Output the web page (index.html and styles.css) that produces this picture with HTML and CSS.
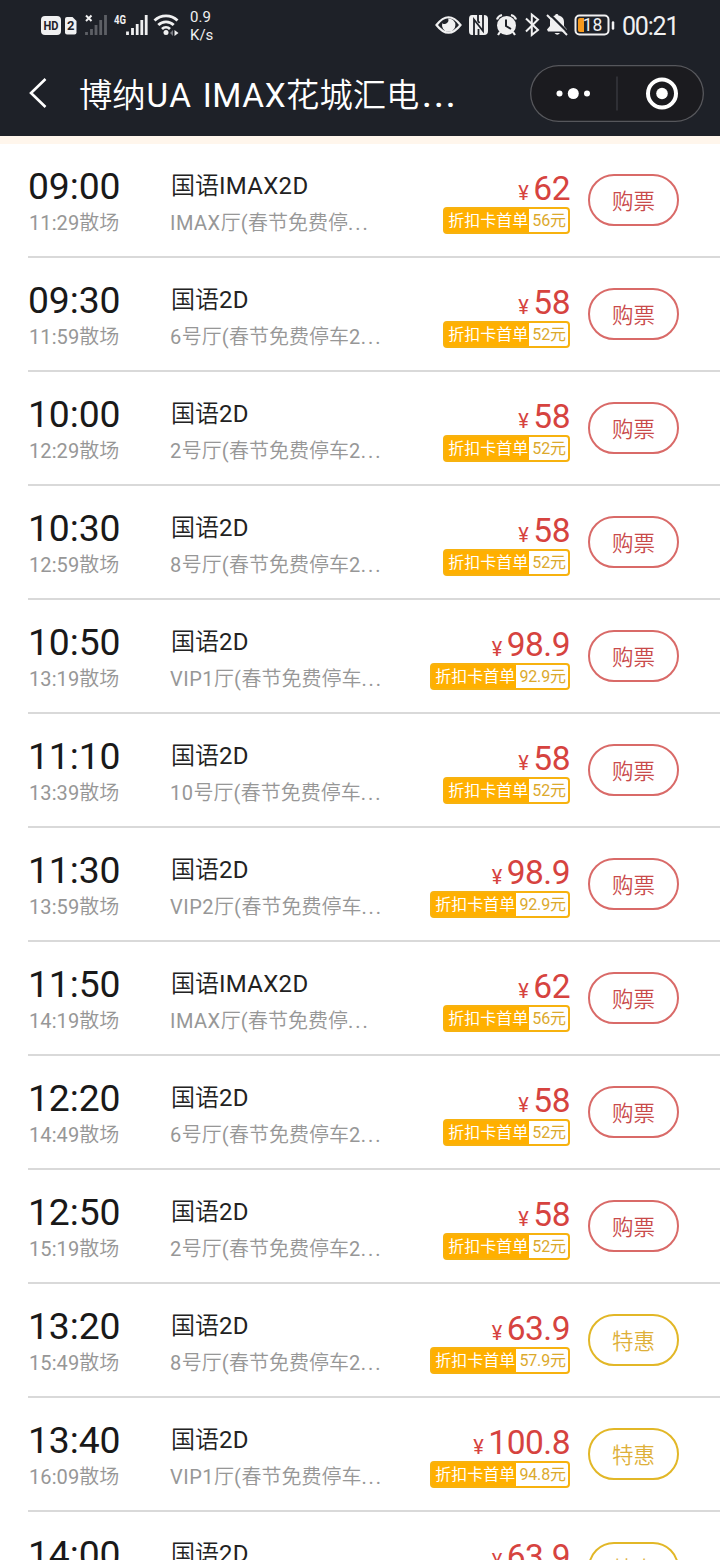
FILE: index.html
```html
<!DOCTYPE html>
<html lang="zh-CN">
<head>
<meta charset="utf-8">
<title>博纳UA IMAX花城汇电影院</title>
<link rel="stylesheet" href="styles.css">
</head>
<body>
<div class="screen">
  <header class="header">
    <div class="status">
      <svg class="status-left" width="150" height="50" viewBox="0 0 150 50">
        <rect x="11" y="16" width="20" height="19" rx="4" fill="#f0f0f1"/>
        <text x="21" y="30.3" class="hd" text-anchor="middle" textLength="15" lengthAdjust="spacingAndGlyphs">HD</text>
        <path d="M37 17h5.500l4 4v11.500a2 2 0 0 1-2 2H37a2 2 0 0 1-2-2V19a2 2 0 0 1 2-2z" fill="#f0f0f1"/>
        <text x="40.700" y="30.300" class="sim" text-anchor="middle">2</text>
        <path d="M56 15.500l5.500 5.500M61.500 15.500L56 21" stroke="#f0f0f1" stroke-width="2"/>
        <path d="M57 35v-3M62 35v-6M66.500 35v-10M71.200 35v-15M76 35V15" transform="translate(-.5 0)" stroke="#5d5f65" stroke-width="2.800"/>
        <text x="84" y="23.500" class="net" textLength="12" lengthAdjust="spacingAndGlyphs">4G</text>
        <path d="M97.500 35v-3.500M102.500 35v-7M107.200 35v-11M111.800 35v-15M116.200 35V15" stroke="#f0f0f1" stroke-width="2.800"/>
        <g fill="none" stroke="#f0f0f1" stroke-width="2.800"><path d="M124.500 20.500a16.500 16.500 0 0 1 23 0M128.300 25a11 11 0 0 1 15.400 0M132 29a5.800 5.800 0 0 1 8 0"/></g>
        <circle cx="136" cy="32.500" r="2.500" fill="#f0f0f1"/>
        <path d="M144.500 30v6l4-3z" fill="#f0f0f1"/><path d="M143 30v6l-3-3z" fill="#777980"/>
      </svg>
      <div class="speed"><span>0.9</span><span>K/s</span></div>
      <svg class="status-right" width="185" height="50" viewBox="0 0 185 50">
        <path d="M1.500 25Q13.500 9.500 25.500 25Q13.500 40.500 1.500 25z" fill="none" stroke="#f0f0f1" stroke-width="2.200"/>
        <path d="M13 18.500a3.800 3.800 0 0 1-5.700 4.700a6.700 6.700 0 1 0 5.700-4.700z" fill="#f0f0f1"/>
        <path d="M37 15h12q4 0 4 4v12q0 4-4 4H37q-3 0-3-4V19q0-4 3-4z" fill="#f0f0f1"/>
        <path d="M39 35V19.500l9 11.500V15M43 15v6l1.500 2M43.500 29v6" fill="none" stroke="#1e2128" stroke-width="1.800"/>
        <circle cx="71.500" cy="25.500" r="9.500" fill="#f0f0f1"/>
        <path d="M62 19.500q1-3.500 5-4.500M76 15q4 1 5 4.500M65 32l-2 3M78 32l2 3" fill="none" stroke="#f0f0f1" stroke-width="2.200"/>
        <path d="M71 19.500v6.500l5 3" fill="none" stroke="#1e2128" stroke-width="2"/>
        <path d="M91 18.500l12 11.500-6.200 5V14.500l6.200 5L91 31.500" fill="none" stroke="#f0f0f1" stroke-width="2"/>
        <path d="M113 31.500h19v-2l-3-3.500v-4c0-4-2.500-6-5.500-6.500a1.800 1.800 0 0 0-3.500 0c-3 .5-5 3-5 6.500v4l-3 3.500z" fill="#f0f0f1"/>
        <path d="M119.500 33h5.500q-2.700 3.500-5.500 0z" fill="#f0f0f1"/>
        <path d="M113.500 13l20 20" stroke="#1e2128" stroke-width="2.400"/><path d="M112 15l20 20" stroke="#f0f0f1" stroke-width="2"/>
        <rect x="140.500" y="15.500" width="33" height="19" rx="4" fill="none" stroke="#f0f0f1" stroke-width="2"/>
        <path d="M145 18h4v14h-4q-2 0-2-2V20q0-2 2-2z" fill="#f79a1e"/>
        <text x="157.500" y="31.300" class="battery" text-anchor="middle">18</text>
        <path d="M178 22.500v6" stroke="#f0f0f1" stroke-width="2.500" stroke-linecap="round"/>
      </svg>
      <span class="clock">00:21</span>
    </div>
    <div class="nav">
      <svg class="back" width="20" height="32" viewBox="0 0 20 32"><path d="M17.500 2L3 16l14.500 14" fill="none" stroke="#fff" stroke-width="2.600"/></svg>
      <h1 class="title">博纳<span class="title-ua">UA</span> <span class="title-imax">IMAX</span>花城汇电<span class="title-dots">...</span></h1>
      <div class="capsule">
        <svg width="174" height="57" viewBox="0 0 174 57"><g fill="#fff"><circle cx="29.500" cy="28.500" r="3"/><circle cx="43.300" cy="28.500" r="5.500"/><circle cx="57" cy="28.500" r="3"/><circle cx="132" cy="28.500" r="5.800"/></g><path d="M87 11.500v34" stroke="#3b3c42" stroke-width="1.300"/><circle cx="132" cy="28.500" r="14" fill="none" stroke="#fff" stroke-width="4"/></svg>
      </div>
    </div>
  </header>
  <main class="list">
    <section class="row"><div class="times"><b class="start">09:00</b><span class="end"><i>11:29</i>散场</span></div><div class="info"><span class="lang">国语<i>IMAX2D</i></span><span class="hall"><i>IMAX</i>厅<i>(</i>春节免费停<i class="dots">...</i></span></div><div class="cost"><span class="price"><small>¥</small>62</span><span class="badge"><span class="label">折扣卡首单</span><span class="value"><i>56</i>元</span></span></div><button class="buy">购票</button></section>
    <section class="row"><div class="times"><b class="start">09:30</b><span class="end"><i>11:59</i>散场</span></div><div class="info"><span class="lang">国语<i>2D</i></span><span class="hall"><i>6</i>号厅<i>(</i>春节免费停车<i>2</i><i class="dots">...</i></span></div><div class="cost"><span class="price"><small>¥</small>58</span><span class="badge"><span class="label">折扣卡首单</span><span class="value"><i>52</i>元</span></span></div><button class="buy">购票</button></section>
    <section class="row"><div class="times"><b class="start">10:00</b><span class="end"><i>12:29</i>散场</span></div><div class="info"><span class="lang">国语<i>2D</i></span><span class="hall"><i>2</i>号厅<i>(</i>春节免费停车<i>2</i><i class="dots">...</i></span></div><div class="cost"><span class="price"><small>¥</small>58</span><span class="badge"><span class="label">折扣卡首单</span><span class="value"><i>52</i>元</span></span></div><button class="buy">购票</button></section>
    <section class="row"><div class="times"><b class="start">10:30</b><span class="end"><i>12:59</i>散场</span></div><div class="info"><span class="lang">国语<i>2D</i></span><span class="hall"><i>8</i>号厅<i>(</i>春节免费停车<i>2</i><i class="dots">...</i></span></div><div class="cost"><span class="price"><small>¥</small>58</span><span class="badge"><span class="label">折扣卡首单</span><span class="value"><i>52</i>元</span></span></div><button class="buy">购票</button></section>
    <section class="row"><div class="times"><b class="start">10:50</b><span class="end"><i>13:19</i>散场</span></div><div class="info"><span class="lang">国语<i>2D</i></span><span class="hall"><i>VIP1</i>厅<i>(</i>春节免费停车<i class="dots">...</i></span></div><div class="cost"><span class="price"><small>¥</small>98.9</span><span class="badge"><span class="label">折扣卡首单</span><span class="value"><i>92.9</i>元</span></span></div><button class="buy">购票</button></section>
    <section class="row"><div class="times"><b class="start">11:10</b><span class="end"><i>13:39</i>散场</span></div><div class="info"><span class="lang">国语<i>2D</i></span><span class="hall"><i>10</i>号厅<i>(</i>春节免费停车<i class="dots">...</i></span></div><div class="cost"><span class="price"><small>¥</small>58</span><span class="badge"><span class="label">折扣卡首单</span><span class="value"><i>52</i>元</span></span></div><button class="buy">购票</button></section>
    <section class="row"><div class="times"><b class="start">11:30</b><span class="end"><i>13:59</i>散场</span></div><div class="info"><span class="lang">国语<i>2D</i></span><span class="hall"><i>VIP2</i>厅<i>(</i>春节免费停车<i class="dots">...</i></span></div><div class="cost"><span class="price"><small>¥</small>98.9</span><span class="badge"><span class="label">折扣卡首单</span><span class="value"><i>92.9</i>元</span></span></div><button class="buy">购票</button></section>
    <section class="row"><div class="times"><b class="start">11:50</b><span class="end"><i>14:19</i>散场</span></div><div class="info"><span class="lang">国语<i>IMAX2D</i></span><span class="hall"><i>IMAX</i>厅<i>(</i>春节免费停<i class="dots">...</i></span></div><div class="cost"><span class="price"><small>¥</small>62</span><span class="badge"><span class="label">折扣卡首单</span><span class="value"><i>56</i>元</span></span></div><button class="buy">购票</button></section>
    <section class="row"><div class="times"><b class="start">12:20</b><span class="end"><i>14:49</i>散场</span></div><div class="info"><span class="lang">国语<i>2D</i></span><span class="hall"><i>6</i>号厅<i>(</i>春节免费停车<i>2</i><i class="dots">...</i></span></div><div class="cost"><span class="price"><small>¥</small>58</span><span class="badge"><span class="label">折扣卡首单</span><span class="value"><i>52</i>元</span></span></div><button class="buy">购票</button></section>
    <section class="row"><div class="times"><b class="start">12:50</b><span class="end"><i>15:19</i>散场</span></div><div class="info"><span class="lang">国语<i>2D</i></span><span class="hall"><i>2</i>号厅<i>(</i>春节免费停车<i>2</i><i class="dots">...</i></span></div><div class="cost"><span class="price"><small>¥</small>58</span><span class="badge"><span class="label">折扣卡首单</span><span class="value"><i>52</i>元</span></span></div><button class="buy">购票</button></section>
    <section class="row"><div class="times"><b class="start">13:20</b><span class="end"><i>15:49</i>散场</span></div><div class="info"><span class="lang">国语<i>2D</i></span><span class="hall"><i>8</i>号厅<i>(</i>春节免费停车<i>2</i><i class="dots">...</i></span></div><div class="cost"><span class="price"><small>¥</small>63.9</span><span class="badge"><span class="label">折扣卡首单</span><span class="value"><i>57.9</i>元</span></span></div><button class="buy deal">特惠</button></section>
    <section class="row"><div class="times"><b class="start">13:40</b><span class="end"><i>16:09</i>散场</span></div><div class="info"><span class="lang">国语<i>2D</i></span><span class="hall"><i>VIP1</i>厅<i>(</i>春节免费停车<i class="dots">...</i></span></div><div class="cost"><span class="price"><small>¥</small>100.8</span><span class="badge"><span class="label">折扣卡首单</span><span class="value"><i>94.8</i>元</span></span></div><button class="buy deal">特惠</button></section>
    <section class="row"><div class="times"><b class="start">14:00</b></div><div class="info"><span class="lang">国语<i>2D</i></span></div><div class="cost"><span class="price"><small>¥</small>63.9</span></div><button class="buy deal">特惠</button></section>
  </main>
</div>
</body>
</html>
```
FILE: styles.css
```css
* { box-sizing: border-box; }
body { margin: 0; background: #fff; font-family: Roboto, "Noto Sans CJK SC", sans-serif; }
i { font-style: normal; font-weight: 400; }
.screen { width: 720px; height: 1560px; overflow: hidden; background: #fff; }
.header { height: 136px; background: #1e2128; color: #fff; }
.status { display: flex; height: 50px; color: #f0f0f1; }
.status-left { margin-left: 30px; flex: none; }
.hd { font: 700 13px Roboto, sans-serif; fill: #1e2128; }
.sim { font: 700 13px Roboto, sans-serif; fill: #1e2128; }
.net { font: 700 12px Roboto, sans-serif; fill: #f0f0f1; }
.battery { font: 400 17.5px Roboto, sans-serif; fill: #f0f0f1; }
.speed { display: flex; flex-direction: column; width: 44px; margin-left: 10px; padding-top: 8px; font-size: 15px; line-height: 18px; }
.status-right { flex: none; margin-left: 201px; }
.clock { margin-left: 2px; font-size: 25px; line-height: 53px; letter-spacing: -1.2px; }
.nav { display: flex; align-items: center; height: 86px; padding: 0 16px 0 28px; }
.back { flex: none; }
.title { width: 400px; margin: 5px 0 0 31px; font-size: 33.3px; font-weight: 350; line-height: 48px; white-space: nowrap; }
.title span { font-weight: 400; }
.title-ua { margin-left: 1px; letter-spacing: 1.5px; }
.title-imax { margin-left: 2px; letter-spacing: .6px; }
.title .title-dots { margin-left: 3px; font-weight: 500; letter-spacing: 2.6px; }
.capsule { width: 174px; height: 57px; margin-left: auto; border-radius: 29px; background: #1b1b1f; box-shadow: inset 0 0 0 1.3px #56575c; }
.capsule svg { display: block; }
.list { border-top: 8px solid #fff6ec; padding-left: 28px; }
.row { display: flex; height: 114px; border-bottom: 2px solid #d9d9d9; padding-top: 22px; }
.times, .info { display: flex; flex-direction: column; flex: none; }
.times { width: 142px; }
.info { width: 231px; padding-left: 1px; white-space: nowrap; }
.start { font-size: 37.3px; font-weight: 400; line-height: 40px; height: 40px; color: #191919; letter-spacing: -.1px; }
.end, .hall { height: 30px; font-size: 20px; line-height: 34px; color: #979797; font-weight: 350; }
.end { padding-left: 1px; }
.hall { margin-left: -1px; }
.end i { letter-spacing: .1px; }
.hall i { letter-spacing: .5px; }
.lang { height: 40px; font-size: 24px; line-height: 40px; font-weight: 350; color: #222; }
.lang i { letter-spacing: .3px; }
.hall .dots { letter-spacing: 1.9px; }
.cost { display: flex; flex-direction: column; align-items: flex-end; width: 169px; }
.price { height: 41px; font-size: 33.5px; line-height: 46px; color: #d6433f; letter-spacing: -.5px; }
.price small { margin-right: 5px; font-size: 20px; }
.badge { display: flex; height: 27px; border: 2px solid #f7b20f; border-radius: 4px; background: #ffb000; font-size: 16px; line-height: 23px; }
.label { padding: 0 1px 0 3px; color: #fff; }
.value { padding: 0 2px 0 3px; border-radius: 0 2px 2px 0; background: #fff; color: #dca92c; }
.value i { letter-spacing: -.15px; }
.buy { width: 91px; height: 52px; margin: 8px 0 0 18px; padding: 0; border: 2px solid #d96a68; border-radius: 26px; background: #fff; color: #c94a4a; font: 350 21.5px/46px "Noto Sans CJK SC", sans-serif; }
.deal { border-color: #e2b727; color: #deb03a; }
```
